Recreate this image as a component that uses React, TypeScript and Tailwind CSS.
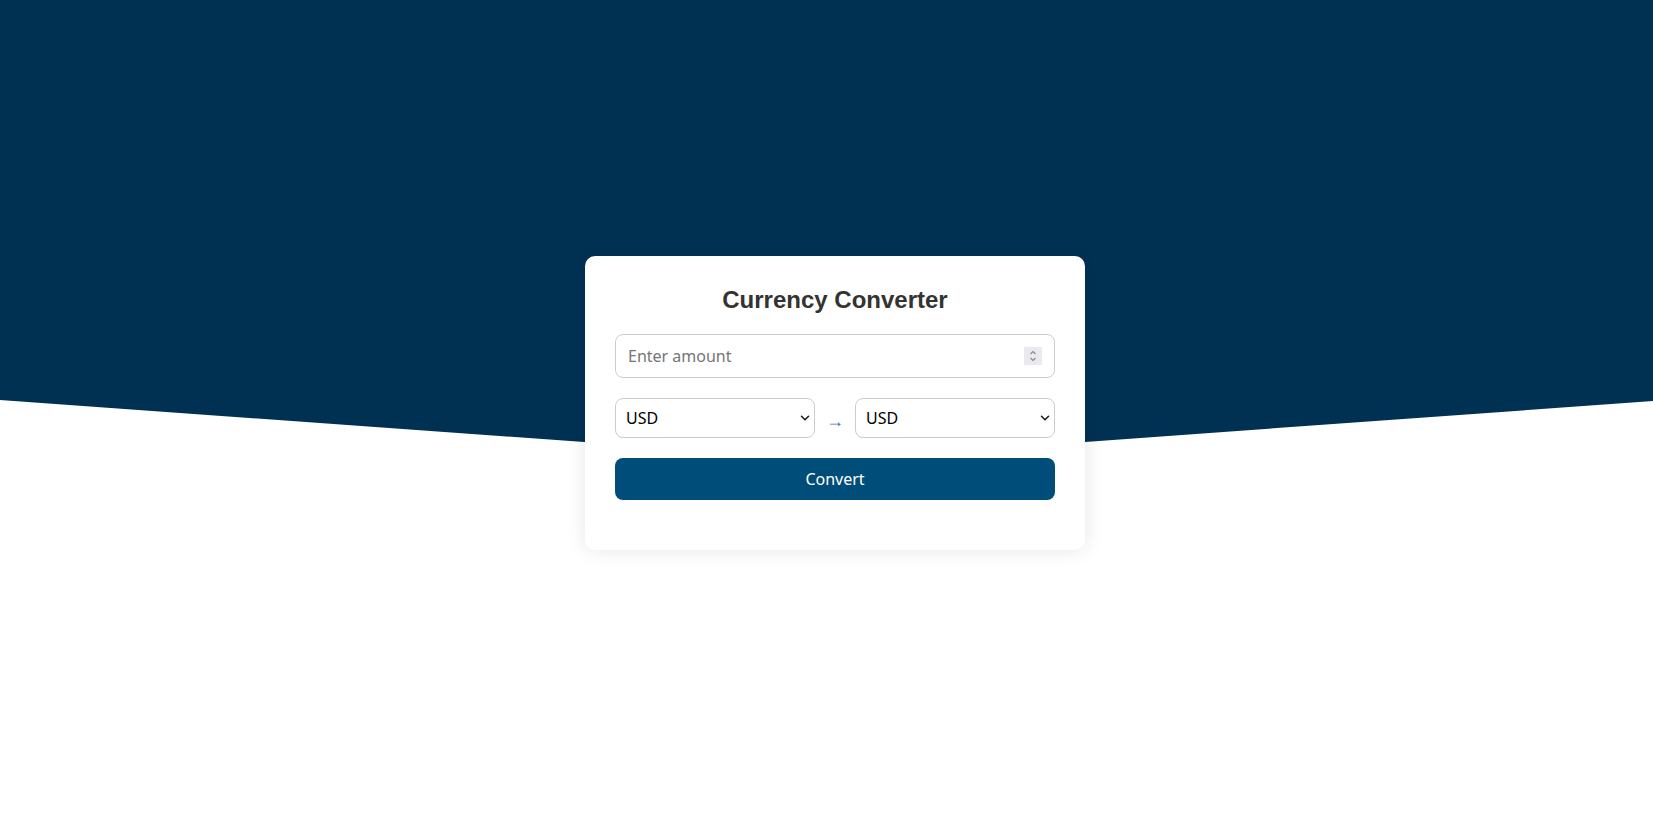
import { useState } from "react";
import { ChevronDown } from "lucide-react";

const currencies = ["USD", "EUR", "GBP", "JPY", "INR", "AUD", "CAD"];

function CurrencySelect({
  value,
  onChange,
}: {
  value: string;
  onChange: (v: string) => void;
}) {
  return (
    <div className="relative w-[200px]">
      <select
        value={value}
        onChange={(e) => onChange(e.target.value)}
        className="block h-[40px] w-full appearance-none rounded-[8px] border border-[#ccc] bg-white pl-[10px] pr-[24px] text-base text-black outline-none"
      >
        {currencies.map((c) => (
          <option key={c}>{c}</option>
        ))}
      </select>
      <ChevronDown
        className="pointer-events-none absolute right-[3px] top-1/2 h-[14px] w-[14px] -translate-y-1/2 text-[#1a1a1a]"
        strokeWidth={2.6}
      />
    </div>
  );
}

export default function App() {
  const [amount, setAmount] = useState("");
  const [from, setFrom] = useState("USD");
  const [to, setTo] = useState("USD");

  return (
    <div className="relative min-h-screen bg-white font-['Noto_Sans',sans-serif]">
      {/* dark backdrop with the V cut */}
      <div className="absolute inset-x-0 top-0 h-[460px] bg-[#003153] [clip-path:polygon(0_0,100%_0,100%_401px,calc(50%_+_8px)_460px,0_400px)]" />

      <div className="relative flex justify-center pt-[256px] pl-[17px]">
        <div className="w-[500px] rounded-[10px] bg-white px-[30px] pt-[30px] pb-[50px] shadow-[0_0_20px_rgba(0,0,0,0.1)]">
          <h1 className="mb-[20px] text-center font-['Liberation_Sans',Arial,sans-serif] text-2xl leading-[28px] font-bold text-[#333]">
            Currency Converter
          </h1>

          <div className="relative">
            <input
              type="number"
              placeholder="Enter amount"
              value={amount}
              onChange={(e) => setAmount(e.target.value)}
              className="block h-[44px] w-full rounded-[8px] border border-[#ccc] pl-[12px] pr-[36px] text-base text-[#333] placeholder:text-[#757575] outline-none [appearance:textfield] [&::-webkit-inner-spin-button]:appearance-none [&::-webkit-outer-spin-button]:appearance-none"
            />
            {/* spin buttons */}
            <svg
              viewBox="0 0 18 18"
              className="pointer-events-none absolute right-[13px] top-1/2 h-[18px] w-[18px] -translate-y-1/2"
            >
              <rect width="18" height="18" fill="#e9e9ee" />
              <path
                d="M6.5 7 L9 4.5 L11.5 7 M6.5 11 L9 13.5 L11.5 11"
                fill="none"
                stroke="#8a8a8f"
                strokeWidth="1.2"
              />
            </svg>
          </div>

          <div className="mt-[20px] flex items-center justify-between">
            <CurrencySelect value={from} onChange={setFrom} />
            <span className="text-lg leading-none text-[#4a76a8] pt-[3px]">→</span>
            <CurrencySelect value={to} onChange={setTo} />
          </div>

          <button className="mt-[20px] h-[42px] w-full rounded-[8px] bg-[#004d7a] text-base text-white">
            Convert
          </button>
        </div>
      </div>
    </div>
  );
}
